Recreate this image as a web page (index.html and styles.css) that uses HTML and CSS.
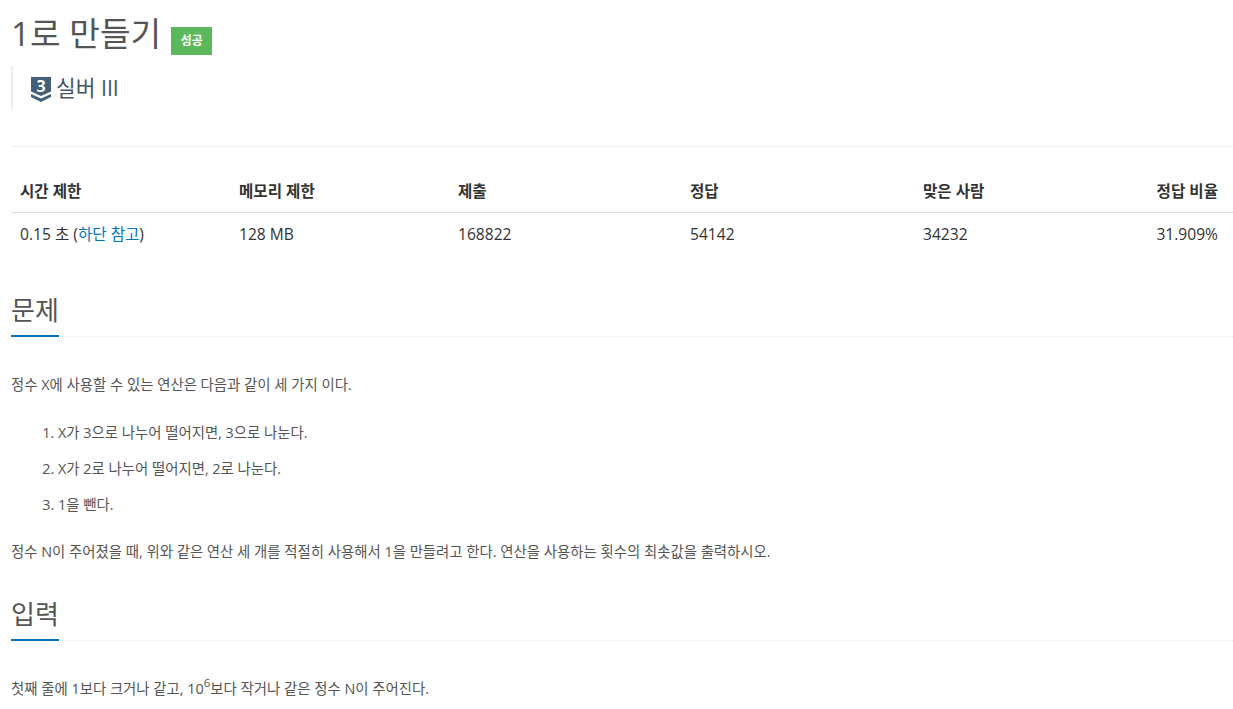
FILE: index.html
```html
<!DOCTYPE html>
<html lang="ko">
<head>
  <meta charset="UTF-8" />
  <title>1로 만들기</title>
  <link rel="stylesheet" href="styles.css">
</head>
<body>

  <div class="page-header">
    <h1 class="problem-title">
      <span>1로 만들기</span>
      <span class="label-success">성공</span>
    </h1>
    <blockquote class="tier">
      <svg class="tier-icon" viewBox="0 0 20 25" width="20" height="25">
        <path d="M0 0H20V14.5L10 19L0 14.5Z" fill="#435f7a"/>
        <path d="M0 17L10 21.5L20 17V20L10 25L0 20Z" fill="#435f7a"/>
        <text x="10" y="15" class="tier-num">3</text>
      </svg>
      <span>실버 III</span>
    </blockquote>
  </div>

  <table class="info-table">
    <thead>
      <tr>
        <th class="col-time">시간 제한</th>
        <th class="col-mem">메모리 제한</th>
        <th class="col-submit">제출</th>
        <th class="col-correct">정답</th>
        <th class="col-people">맞은 사람</th>
        <th class="col-ratio">정답 비율</th>
      </tr>
    </thead>
    <tbody>
      <tr>
        <td>0.15 초 (<a href="#">하단 참고</a>)</td>
        <td>128 MB</td>
        <td>168822</td>
        <td>54142</td>
        <td>34232</td>
        <td class="col-ratio">31.909%</td>
      </tr>
    </tbody>
  </table>

  <section class="problem-section first">
    <div class="headline"><h2>문제</h2></div>
    <p>정수 X에 사용할 수 있는 연산은 다음과 같이 세 가지 이다.</p>
    <ol>
      <li>X가 3으로 나누어 떨어지면, 3으로 나눈다.</li>
      <li>X가 2로 나누어 떨어지면, 2로 나눈다.</li>
      <li>1을 뺀다.</li>
    </ol>
    <p>정수 N이 주어졌을 때, 위와 같은 연산 세 개를 적절히 사용해서 1을 만들려고 한다. 연산을 사용하는 횟수의 최솟값을 출력하시오.</p>
  </section>

  <section class="problem-section">
    <div class="headline"><h2>입력</h2></div>
    <p>첫째 줄에 1보다 크거나 같고, 10<sup>6</sup>보다 작거나 같은 정수 N이 주어진다.</p>
  </section>

</body>
</html>
```

FILE: styles.css
```css
* {
  box-sizing: border-box;
}

html {
  overflow: hidden;
}

body {
  margin: 0;
  padding: 0 0 0 11px;
  background: #fff;
  color: #333;
  font-family: "Open Sans", "Noto Sans CJK KR", sans-serif;
  font-size: 14px;
  line-height: 20px;
}

.page-header {
  height: 147px;
  border-bottom: 1px solid #eee;
}

.problem-title {
  margin: 0;
  padding-top: 12px;
  display: flex;
  align-items: flex-start;
  gap: 10px;
  height: 55px;
  font-size: 33.3px;
  font-weight: 400;
  line-height: 42px;
  color: #555;
}

.label-success {
  margin-top: 15px;
  width: 41px;
  height: 28px;
  background: #5cb85c;
  color: #fff;
  font-size: 12px;
  font-weight: 700;
  line-height: 28px;
  text-align: center;
}

.tier {
  margin: 11px 0 0;
  height: 45px;
  padding: 10px 0 0 18px;
  display: flex;
  align-items: flex-start;
  gap: 5px;
  border-left: 2px solid #eee;
  font-size: 21.4px;
  line-height: 24px;
  color: #456;
}

.tier-icon {
  margin-top: 1px;
  overflow: visible;
}

.tier-num {
  fill: #fff;
  font-family: "Open Sans", sans-serif;
  font-size: 16px;
  font-weight: 700;
  text-anchor: middle;
}

.info-table {
  width: 100%;
  margin-top: 20px;
  border-collapse: collapse;
  table-layout: fixed;
}

.info-table th {
  height: 45px;
  padding: 10px 9px 6px;
  border-bottom: 1px solid #ddd;
  font-size: 15.6px;
  font-weight: 700;
  text-align: left;
}

.info-table td {
  height: 41px;
  padding: 9px 9px 7px;
  font-size: 15.6px;
}

.col-time { width: 219px; }
.col-mem { width: 219px; }
.col-submit { width: 232px; }
.col-correct { width: 233px; }
.col-people { width: 233px; }

.info-table .col-ratio {
  padding-right: 15px;
  text-align: right;
}

a {
  color: #0076c0;
  text-decoration: none;
}

.problem-section.first {
  margin-top: 39px;
}

.problem-section {
  margin-top: 34px;
  color: #555;
  font-size: 14.4px;
}

.headline {
  height: 45px;
  border-bottom: 1px dotted #e4e9f0;
}

.headline h2 {
  display: inline-block;
  height: 45px;
  margin: 0;
  border-bottom: 2px solid #0076c0;
  font-size: 26px;
  font-weight: 400;
  line-height: 36px;
  color: #555;
}

p {
  margin: 38px 0 0;
  line-height: 20px;
}

ol {
  margin: 28px 0 0;
  padding-left: 47px;
}

li {
  margin-bottom: 16px;
  line-height: 20px;
}

ol + p {
  margin-top: 27px;
}

sup {
  font-size: 80%;
  line-height: 0;
  position: relative;
  top: -0.6em;
  vertical-align: baseline;
}
```
